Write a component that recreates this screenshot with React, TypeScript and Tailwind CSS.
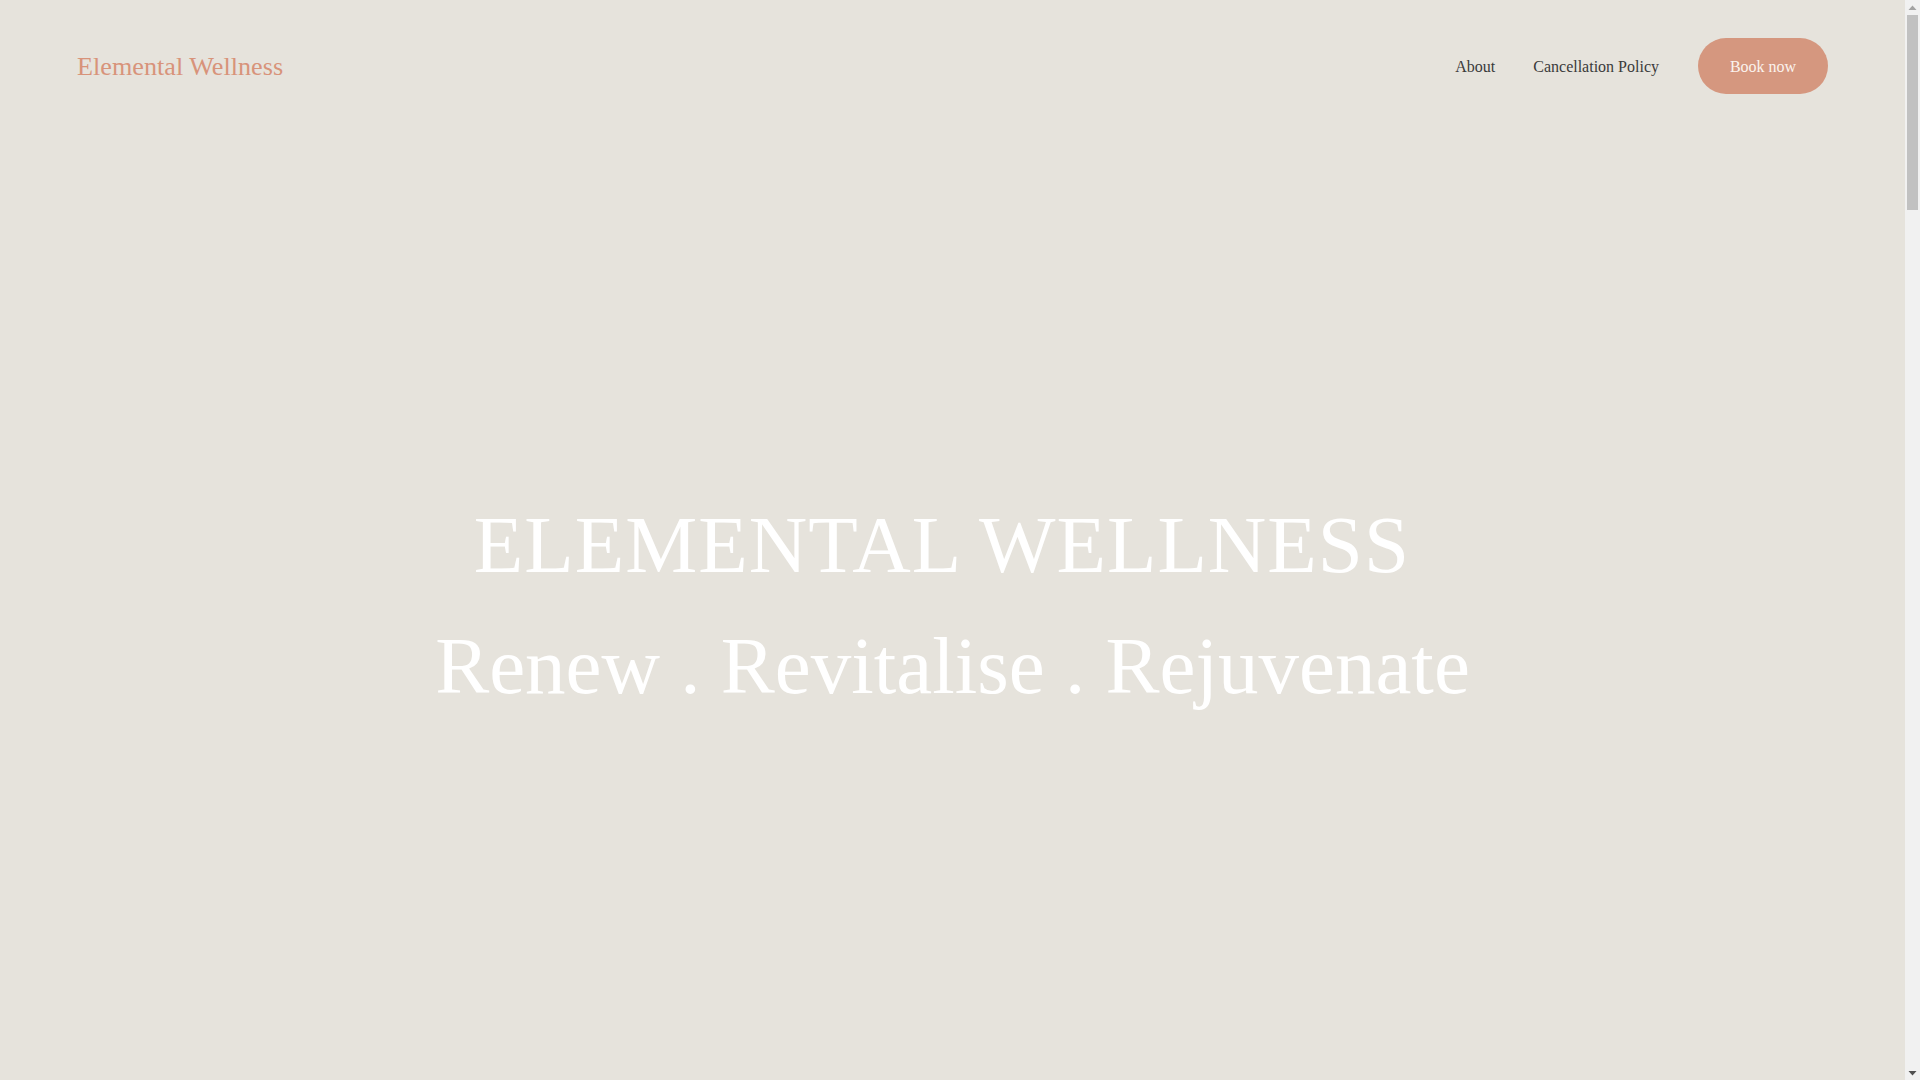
import React from "react";

function FakeScrollbar() {
  return (
    <div className="fixed right-0 top-0 flex h-screen w-[15px] flex-col bg-[#f1f1f1]">
      <div className="flex h-[15px] items-center justify-center">
        <svg width="9" height="6" viewBox="0 0 9 6">
          <polygon points="4.5,0.5 8.5,5 0.5,5" fill="#a3a3a3" />
        </svg>
      </div>
      <div className="flex-1 px-[2px]">
        <div className="h-[195px] w-full bg-[#c1c1c1]" />
      </div>
      <div className="flex h-[15px] items-center justify-center">
        <svg width="9" height="6" viewBox="0 0 9 6">
          <polygon points="0.5,1 8.5,1 4.5,5.5" fill="#505050" />
        </svg>
      </div>
    </div>
  );
}

export default function App() {
  const serif = { fontFamily: '"Liberation Serif", "Times New Roman", serif' };
  return (
    <div className="min-h-screen w-full bg-[#e6e3dc] pr-[15px]" style={serif}>
      <header className="flex h-[132px] items-center justify-between px-[77px]">
        <a href="#" className="mt-[2px] text-[26.2px] leading-none text-[#d8937a]">
          Elemental Wellness
        </a>
        <nav className="flex items-center">
          <a href="#" className="mt-[2px] text-[16px] leading-5 text-[#3a3a3a]">About</a>
          <a href="#" className="ml-[38px] mt-[2px] text-[16px] leading-5 text-[#3a3a3a]">Cancellation Policy</a>
          <a
            href="#"
            className="ml-[39px] flex h-[56px] w-[130px] items-center justify-center rounded-full bg-[#d5977f] pt-[1px] text-[16px] leading-5 text-[#fbf3ee]"
          >
            Book now
          </a>
        </nav>
      </header>
      <section className="flex h-[948px] flex-col items-center justify-center text-center text-white">
        <h1 className="text-[81px] font-normal leading-[1.5] tracking-[1px]">ELEMENTAL WELLNESS{"\u00A0"}</h1>
        <p className="text-[81px] leading-[1.5]">Renew . Revitalise . Rejuvenate</p>
      </section>
      <section className="h-[4735px]" />
      <FakeScrollbar />
    </div>
  );
}
